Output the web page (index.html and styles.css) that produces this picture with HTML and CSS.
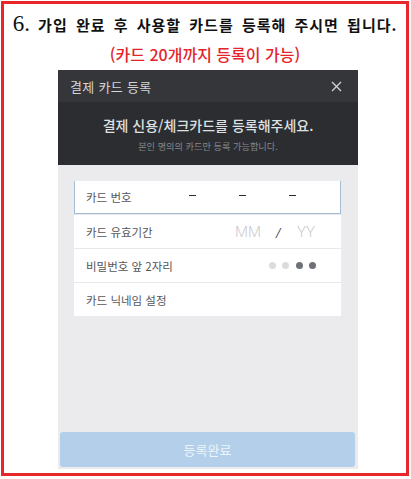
FILE: index.html
```html
<!DOCTYPE html>
<html lang="ko">
<head>
<meta charset="utf-8">
<link rel="stylesheet" href="styles.css">
</head>
<body>
<div class="frame">
  <h1 class="title"><span class="num">6.</span> 가입 완료 후 사용할 카드를 등록해 주시면 됩니다.</h1>
  <p class="note">(카드 20개까지 등록이 가능)</p>
  <div class="phone">
    <div class="bar">
      <span class="bar-title">결제 카드 등록</span>
      <svg class="close" width="11" height="11" viewBox="0 0 11 11"><path d="M1 1L10 10M10 1L1 10" stroke="#cfd0d2" stroke-width="1.4" fill="none"/></svg>
    </div>
    <div class="intro">
      <div class="intro-main">결제 신용/체크카드를 등록해주세요.</div>
      <div class="intro-sub">본인 명의의 카드만 등록 가능합니다.</div>
    </div>
    <div class="body">
      <div class="card">
        <div class="row row-active">
          <span class="label">카드 번호</span>
          <div class="dashes"><span class="cell"><i class="dash"></i></span><span class="cell"><i class="dash"></i></span><span class="cell"><i class="dash"></i></span></div>
        </div>
        <div class="row">
          <span class="label">카드 유효기간</span>
          <div class="expiry"><span class="ph">MM</span><span class="slash">/</span><span class="ph">YY</span></div>
        </div>
        <div class="row">
          <span class="label">비밀번호 앞 2자리</span>
          <div class="dots"><i class="dot light"></i><i class="dot light"></i><i class="dot dark"></i><i class="dot dark"></i></div>
        </div>
        <div class="row">
          <span class="label">카드 닉네임 설정</span>
        </div>
      </div>
      <div class="submit">등록완료</div>
    </div>
  </div>
</div>
</body>
</html>
```

FILE: styles.css
```css
* { box-sizing: border-box; }
html, body { margin: 0; padding: 0; background: #ffffff; }
body { width: 411px; height: 479px; overflow: hidden; }

.frame {
  margin: 1px;
  width: 408px;
  height: 475px;
  border: 3px solid #e8262b;
  display: flex;
  flex-direction: column;
  font-family: "Noto Sans CJK KR", "Noto Sans", sans-serif;
}

.title {
  margin: 8px 0 0;
  line-height: 24px;
  font-size: 15px;
  font-weight: 700;
  color: #111;
  text-align: center;
  letter-spacing: 1px;
  word-spacing: 3px;
  white-space: nowrap;
}
.title .num {
  font-family: "Liberation Serif", serif;
  font-size: 23px;
  font-weight: 400;
  letter-spacing: 0;
}

.note {
  margin: 6px 0 0;
  line-height: 22px;
  font-size: 16px;
  font-weight: 500;
  color: #e3242b;
  text-align: center;
}

.phone {
  margin: 5px 0 0 54px;
  width: 300px;
  height: 399px;
  display: flex;
  flex-direction: column;
  background: #ebebed;
}

.bar {
  height: 32px;
  background: #34363a;
  display: flex;
  align-items: center;
  justify-content: space-between;
  padding: 0 16px 0 12px;
}
.bar-title {
  font-size: 13px;
  color: #d4d5d7;
  letter-spacing: 0.3px;
}

.intro {
  height: 63px;
  background: #2b2d31;
  display: flex;
  flex-direction: column;
  align-items: center;
  padding-top: 13px;
}
.intro-main {
  font-size: 14px;
  font-weight: 500;
  color: #dfe0e2;
  line-height: 20px;
}
.intro-sub {
  font-size: 9.2px;
  color: #85878b;
  line-height: 14px;
  margin-top: 4px;
}

.body {
  flex: 1;
  display: flex;
  flex-direction: column;
  padding: 16px 0 2px;
}

.card {
  margin: 0 17px 0 16px;
  background: #ffffff;
}

.row {
  height: 34px;
  display: flex;
  align-items: center;
  justify-content: space-between;
  padding: 0 25px 0 12px;
  border-top: 1px solid #e8e8ea;
}
.row:first-child { border-top: none; }
.row-active {
  height: 33px;
  border: 1px solid #a4bdd6;
  padding-left: 11px;
  padding-right: 0;
}
.label {
  font-size: 11.5px;
  color: #555658;
}

.dashes {
  display: flex;
  padding-right: 23px;
  margin-top: -3px;
}
.cell {
  width: 50px;
  display: flex;
  justify-content: center;
}
.dash {
  display: block;
  width: 7px;
  height: 1.6px;
  background: #2c2c2c;
}

.expiry {
  display: flex;
  align-items: center;
  font-family: Roboto, "Noto Sans", sans-serif;
  padding-right: 1px;
}
.ph {
  font-size: 15px;
  font-weight: 300;
  color: #c9cacc;
}
.slash {
  font-size: 12px;
  color: #444;
  font-style: italic;
  margin: 2px 16px 0 15px;
}

.dots {
  display: flex;
  gap: 6.5px;
}
.dot {
  width: 7px;
  height: 7px;
  border-radius: 50%;
  display: block;
}
.dot.light { background: #dcdcde; }
.dot.dark { background: #6e7276; }

.submit {
  margin: auto 3px 0 2px;
  height: 35px;
  border-radius: 3px;
  background: #b3cfe9;
  color: #eef4fb;
  font-size: 13px;
  display: flex;
  align-items: center;
  justify-content: center;
}
```
